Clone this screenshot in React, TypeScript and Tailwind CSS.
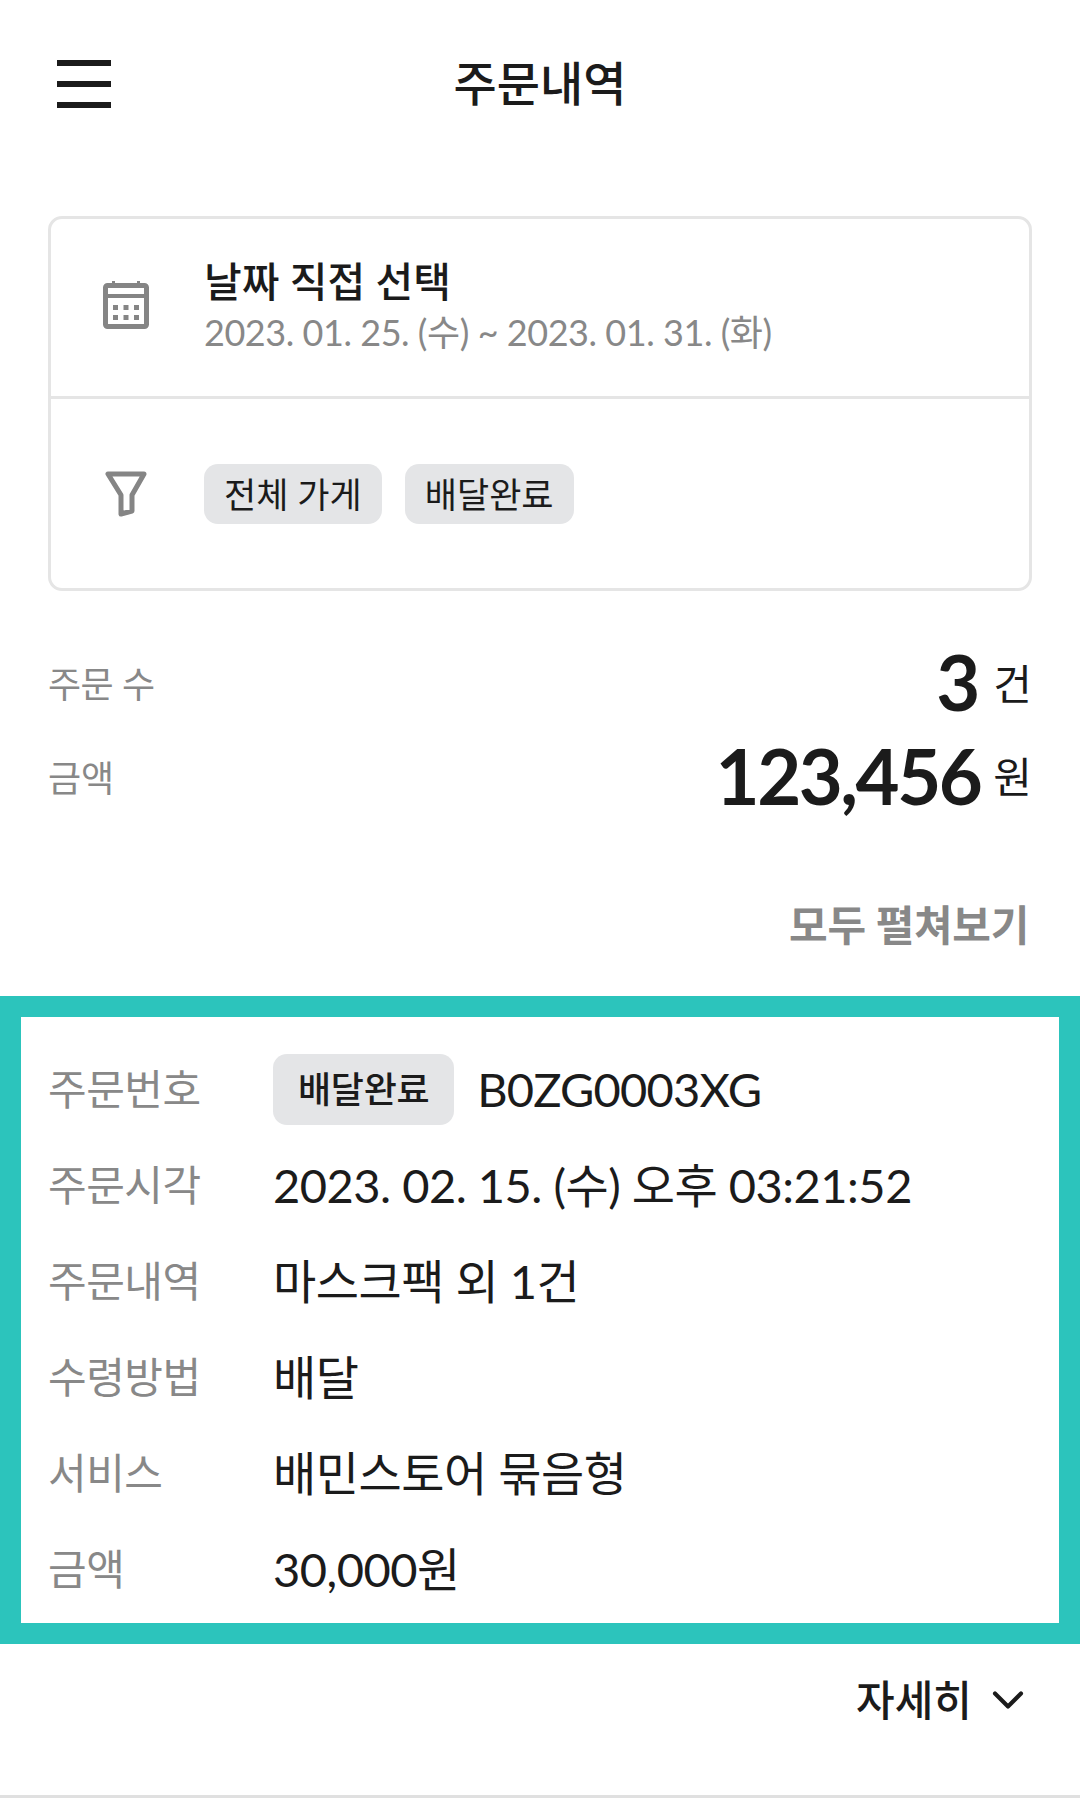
import { ChevronDown } from "lucide-react";

const rows = [
  { label: "주문시각", value: "2023. 02. 15. (수) 오후 03:21:52" },
  { label: "주문내역", value: "마스크팩 외 1건" },
  { label: "수령방법", value: "배달" },
  { label: "서비스", value: "배민스토어 묶음형" },
  { label: "금액", value: "30,000원" },
];

function CalendarIcon() {
  return (
    <svg width="46" height="48" viewBox="0 0 46 48" fill="none" className="text-[#858585]">
      <path d="M9 0h3v4H9zM34 0h3v4h-3z" fill="currentColor" />
      <rect x="2.5" y="4.5" width="41" height="41" rx="2" stroke="currentColor" strokeWidth="5" />
      <rect x="2" y="13" width="42" height="4" fill="currentColor" />
      <path d="M10 24h5v5h-5zM20.5 24h5v5h-5zM31 24h5v5h-5zM10 34h5v5h-5zM20.5 34h5v5h-5zM31 34h5v5h-5z" fill="currentColor" />
    </svg>
  );
}

function FunnelIcon() {
  return (
    <svg width="42" height="46" viewBox="0 0 42 46" fill="none" className="text-[#858585]">
      <path d="M3 3h36L27 24v16l-11 3V24z" stroke="currentColor" strokeWidth="5" strokeLinejoin="round" />
    </svg>
  );
}

export default function App() {
  return (
    <div className="w-[1080px] h-[1800px] bg-white text-[#1b1b1b] font-['Lato','Noto_Sans_CJK_KR',sans-serif] overflow-hidden">
      {/* Header */}
      <header className="h-[168px] grid grid-cols-3 items-center px-[57px]">
        <div className="w-[54px] flex flex-col gap-[15px]">
          <span className="h-[6px] bg-[#1b1b1b]" />
          <span className="h-[6px] bg-[#1b1b1b]" />
          <span className="h-[6px] bg-[#1b1b1b]" />
        </div>
        <h1 className="text-center text-[47px] font-medium whitespace-nowrap pb-[2px]">주문내역</h1>
      </header>

      {/* Filter card */}
      <section className="mt-[48px] mx-[48px] h-[375px] border-[3px] border-[#e5e5e5] rounded-[14px] flex flex-col">
        <div className="h-[177px] flex items-center pb-[5px]">
          <div className="w-[150px] flex justify-center">
            <CalendarIcon />
          </div>
          <div className="ml-[3px] flex flex-col">
            <span className="text-[41px] leading-[54px] font-medium">날짜 직접 선택</span>
            <span className="text-[36px] leading-[46px] text-[#888888] tracking-[-0.45px]">2023. 01. 25. (수) ~ 2023. 01. 31. (화)</span>
          </div>
        </div>
        <div className="h-[3px] -mx-[3px] bg-[#e5e5e5]" />
        <div className="flex-1 flex items-center pt-[1px]">
          <div className="w-[150px] flex justify-center">
            <FunnelIcon />
          </div>
          <div className="ml-[3px] flex gap-[23px]">
            <span className="h-[60px] px-[20px] flex items-center rounded-[14px] bg-[#e4e5e7] text-[35px]">전체 가게</span>
            <span className="h-[60px] px-[20px] flex items-center rounded-[14px] bg-[#e4e5e7] text-[35px]">배달완료</span>
          </div>
        </div>
      </section>

      {/* Summary */}
      <section className="mt-[45px] mx-[48px] flex flex-col gap-[2px]">
        <div className="h-[92px] flex items-center justify-between">
          <span className="text-[36px] text-[#888888] tracking-[-0.5px] pt-[4px]">주문 수</span>
          <span className="flex items-center gap-[13px]">
            <span className="text-[76px] font-bold leading-none">3</span>
            <span className="text-[42px] pt-[4px]">건</span>
          </span>
        </div>
        <div className="h-[92px] flex items-center justify-between">
          <span className="text-[36px] text-[#888888] pt-[3px]">금액</span>
          <span className="flex items-center gap-[13px]">
            <span className="text-[76px] font-bold leading-none tracking-[-2.5px]">123,456</span>
            <span className="text-[42px] pt-[3px]">원</span>
          </span>
        </div>
      </section>

      <div className="mt-[76px] mx-[51px] h-[54px] flex items-center justify-end text-[42px] font-bold text-[#888888] tracking-[-0.3px]">모두 펼쳐보기</div>

      {/* Highlighted order */}
      <section className="mt-[44px] h-[648px] border-[21px] border-[#2cc4bc] pt-[24px] pl-[27px]">
        <div className="h-[96px] flex items-center">
          <span className="w-[225px] text-[42px] text-[#888888] tracking-[-0.5px]">주문번호</span>
          <span className="h-[71px] px-[25px] flex items-center rounded-[14px] bg-[#e4e5e7] text-[36px] font-medium tracking-[-0.3px]">배달완료</span>
          <span className="ml-[23px] text-[47px] tracking-[-0.8px]">B0ZG0003XG</span>
        </div>
        {rows.map((row) => (
          <div key={row.label} className="h-[96px] flex items-center">
            <span className="w-[225px] text-[42px] text-[#888888] tracking-[-0.5px]">{row.label}</span>
            <span className="text-[47px] tracking-[-0.5px]">{row.value}</span>
          </div>
        ))}
      </section>

      {/* Footer toggle */}
      <footer className="h-[154px] border-b-[3px] border-[#e0e0e0] pt-[26px] pr-[46px] flex items-start justify-end">
        <div className="h-[60px] flex items-center gap-[10px]">
          <span className="text-[42px] font-medium">자세히</span>
          <ChevronDown className="w-[52px] h-[52px]" strokeWidth={1.9} />
        </div>
      </footer>
    </div>
  );
}
